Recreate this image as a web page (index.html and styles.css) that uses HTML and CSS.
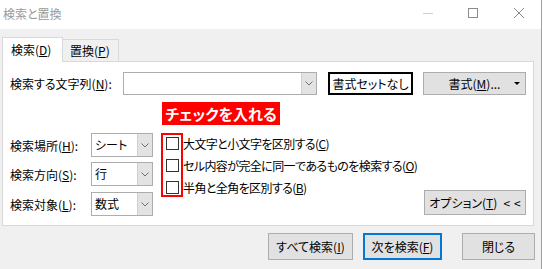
FILE: index.html
```html
<!DOCTYPE html>
<html lang="ja">
<head>
<meta charset="utf-8">
<title>検索と置換</title>
<link rel="stylesheet" href="styles.css">
</head>
<body>
<div class="window">
  <div class="titlebar">
    <span class="title">検索と置換</span>
    <div class="controls">
      <svg class="ctl ctl-min" width="12" height="12" viewBox="0 0 12 12"><path d="M1 6.5H11" stroke="#cfcfcf" stroke-width="1"/></svg>
      <svg class="ctl ctl-max" width="12" height="12" viewBox="0 0 12 12"><rect x="1.5" y="1.5" width="9" height="9" fill="none" stroke="#8a8a8a" stroke-width="1"/></svg>
      <svg class="ctl ctl-close" width="12" height="12" viewBox="0 0 12 12"><path d="M1 1L11 11M11 1L1 11" stroke="#8a8a8a" stroke-width="1"/></svg>
    </div>
  </div>
  <div class="content">
    <div class="tabs">
      <div class="tab tab-active">検索(<u>D</u>)</div>
      <div class="tab">置換(<u>P</u>)</div>
    </div>
    <div class="panel">
      <div class="row-find">
        <span class="lbl lbl-find">検索する文字列(<u>N</u>):</span>
        <div class="combo combo-find">
          <span class="combo-field"></span>
          <span class="combo-drop"><svg width="8" height="5" viewBox="0 0 8 5"><path d="M0.5 0.5L4 4L7.5 0.5" fill="none" stroke="#707070" stroke-width="1"/></svg></span>
        </div>
        <button class="btn btn-noformat">書式セットなし</button>
        <button class="btn btn-format"><span>書式(<u>M</u>)...</span><span class="caret"></span></button>
      </div>
      <div class="note">チェックを入れる</div>
      <div class="opts">
        <div class="selects">
          <div class="sel-row">
            <span class="lbl lbl-sel">検索場所(<u>H</u>):</span>
            <div class="combo combo-sel">
              <span class="combo-field">シート</span>
              <span class="combo-drop"><svg width="8" height="5" viewBox="0 0 8 5"><path d="M0.5 0.5L4 4L7.5 0.5" fill="none" stroke="#707070" stroke-width="1"/></svg></span>
            </div>
          </div>
          <div class="sel-row">
            <span class="lbl lbl-sel">検索方向(<u>S</u>):</span>
            <div class="combo combo-sel">
              <span class="combo-field">行</span>
              <span class="combo-drop"><svg width="8" height="5" viewBox="0 0 8 5"><path d="M0.5 0.5L4 4L7.5 0.5" fill="none" stroke="#707070" stroke-width="1"/></svg></span>
            </div>
          </div>
          <div class="sel-row sel-row-last">
            <span class="lbl lbl-sel">検索対象(<u>L</u>):</span>
            <div class="combo combo-sel">
              <span class="combo-field">数式</span>
              <span class="combo-drop"><svg width="8" height="5" viewBox="0 0 8 5"><path d="M0.5 0.5L4 4L7.5 0.5" fill="none" stroke="#707070" stroke-width="1"/></svg></span>
            </div>
          </div>
        </div>
        <div class="checks">
          <div class="chk-row"><span class="chk"></span><span class="chk-lbl">大文字と小文字を区別する(<u>C</u>)</span></div>
          <div class="chk-row"><span class="chk"></span><span class="chk-lbl">セル内容が完全に同一であるものを検索する(<u>O</u>)</span></div>
          <div class="chk-row"><span class="chk"></span><span class="chk-lbl">半角と全角を区別する(<u>B</u>)</span></div>
          <div class="redbox"></div>
        </div>
        <button class="btn btn-options">オプション(<u>T</u>)<span class="lt">&lt;&lt;</span></button>
      </div>
    </div>
    <div class="footer">
      <button class="btn btn-all">すべて検索(<u>I</u>)</button>
      <button class="btn btn-next">次を検索(<u>F</u>)</button>
      <button class="btn btn-close">閉じる</button>
    </div>
  </div>
</div>
</body>
</html>
```
FILE: styles.css
```css
* { box-sizing: border-box; }
html, body {
  margin: 0;
  padding: 0;
  background: #ffffff;
}
body {
  width: 543px;
  height: 269px;
  overflow: hidden;
  font-family: "Noto Sans CJK JP", "Noto Sans", sans-serif;
  font-size: 12px;
  color: #000;
  font-feature-settings: "palt";
}
u { text-decoration: underline; text-underline-offset: 1px; }

.window {
  width: 542px;
  height: 269px;
  border-right: 1px solid #a0a0a0;
  display: flex;
  flex-direction: column;
}

.titlebar {
  height: 29px;
  background: #ffffff;
  display: flex;
  align-items: center;
  justify-content: space-between;
  padding-left: 3px;
}
.title {
  color: #9a9a9a;
  font-size: 12px;
  line-height: 16px;
  margin-top: -1px;
}
.controls {
  display: flex;
  align-items: center;
  padding-right: 16px;
  margin-top: -3px;
}
.ctl { display: block; }
.ctl-max { margin-left: 33px; }
.ctl-close { margin-left: 34px; }

.content {
  flex: 1;
  background: #f0f0f0;
  padding: 8px 0 0 2px;
}

.tabs {
  display: flex;
  align-items: flex-end;
  height: 24px;
  position: relative;
  z-index: 1;
}
.tab {
  height: 22px;
  width: 56px;
  border: 1px solid #d9d9d9;
  border-bottom: none;
  border-left: none;
  background: #f0f0f0;
  padding-left: 7px;
  line-height: 21px;
}
.tab-active {
  height: 25px;
  width: 61px;
  border-left: 1px solid #d9d9d9;
  background: #ffffff;
  padding-left: 8px;
  line-height: 23px;
  margin-bottom: -1px;
}

.panel {
  width: 532px;
  height: 165px;
  background: #ffffff;
  border: 1px solid #d9d9d9;
  padding: 10px 7px 0 7px;
}

.row-find {
  display: flex;
  align-items: center;
  height: 23px;
}
.lbl { white-space: nowrap; }
.lbl-find { width: 113px; }

.combo {
  display: flex;
  border: 1px solid #adadad;
  background: #ffffff;
}
.combo-field {
  flex: 1;
  padding-left: 3px;
  line-height: 20px;
  white-space: nowrap;
}
.combo-drop {
  width: 15px;
  background: #e3e3e3;
  border-left: 1px solid #cfcfcf;
  display: flex;
  align-items: center;
  justify-content: center;
}
.combo-drop svg { display: block; }
.combo-find { width: 194px; height: 23px; }

.btn {
  font-family: inherit;
  font-size: 12px;
  font-weight: 400;
  font-feature-settings: "palt";
  color: #000;
  background: #e1e1e1;
  border: 1px solid #adadad;
  padding: 0;
  margin: 0;
  white-space: nowrap;
  display: flex;
  align-items: center;
  justify-content: center;
}
.btn-noformat {
  width: 85px;
  height: 23px;
  margin-left: 11px;
  background: #ffffff;
  border: 2px solid #000000;
}
.btn-format {
  width: 103px;
  height: 23px;
  margin-left: 10px;
  position: relative;
}
.caret {
  position: absolute;
  right: 5px;
  top: 9px;
  width: 0;
  height: 0;
  border-left: 3px solid transparent;
  border-right: 3px solid transparent;
  border-top: 3px solid #000;
}

.note {
  margin: 7px 0 0 152px;
  width: 118px;
  height: 23px;
  background: #ff0000;
  color: #ffffff;
  font-weight: 700;
  font-size: 15px;
  line-height: 23px;
  text-align: center;
  white-space: nowrap;
}

.opts {
  display: flex;
  margin-top: 8px;
}
.selects {
  display: flex;
  flex-direction: column;
  gap: 5px;
}
.sel-row {
  display: flex;
  align-items: center;
  height: 24px;
}
.sel-row-last { margin-top: 1px; }
.lbl-sel { width: 81px; }
.combo-sel { width: 62px; height: 24px; }
.combo-sel .combo-field { line-height: 22px; }

.checks {
  position: relative;
  margin-left: 8px;
}
.chk-row {
  display: flex;
  align-items: flex-start;
  height: 22px;
  padding: 4px 0 0 5px;
}
.chk {
  width: 13px;
  height: 13px;
  border: 1px solid #333333;
  background: #ffffff;
  flex: none;
}
.chk-lbl {
  margin-left: 4px;
  line-height: 14px;
  white-space: nowrap;
  letter-spacing: -0.6px;
}
.redbox {
  position: absolute;
  left: 0;
  top: 0;
  width: 22px;
  height: 64px;
  border: 2px solid #ff0000;
}

.btn-options {
  margin-left: auto;
  margin-top: 57px;
  width: 102px;
  height: 25px;
}
.lt {
  margin-left: 6px;
  letter-spacing: 4px;
  margin-right: -4px;
}

.footer {
  display: flex;
  justify-content: flex-end;
  padding: 7px 6px 0 0;
}
.btn-all { width: 85px; height: 27px; }
.btn-next {
  width: 79px;
  height: 27px;
  margin-left: 10px;
  border: 2px solid #0078d7;
}
.btn-close { width: 73px; height: 27px; margin-left: 20px; }
```
